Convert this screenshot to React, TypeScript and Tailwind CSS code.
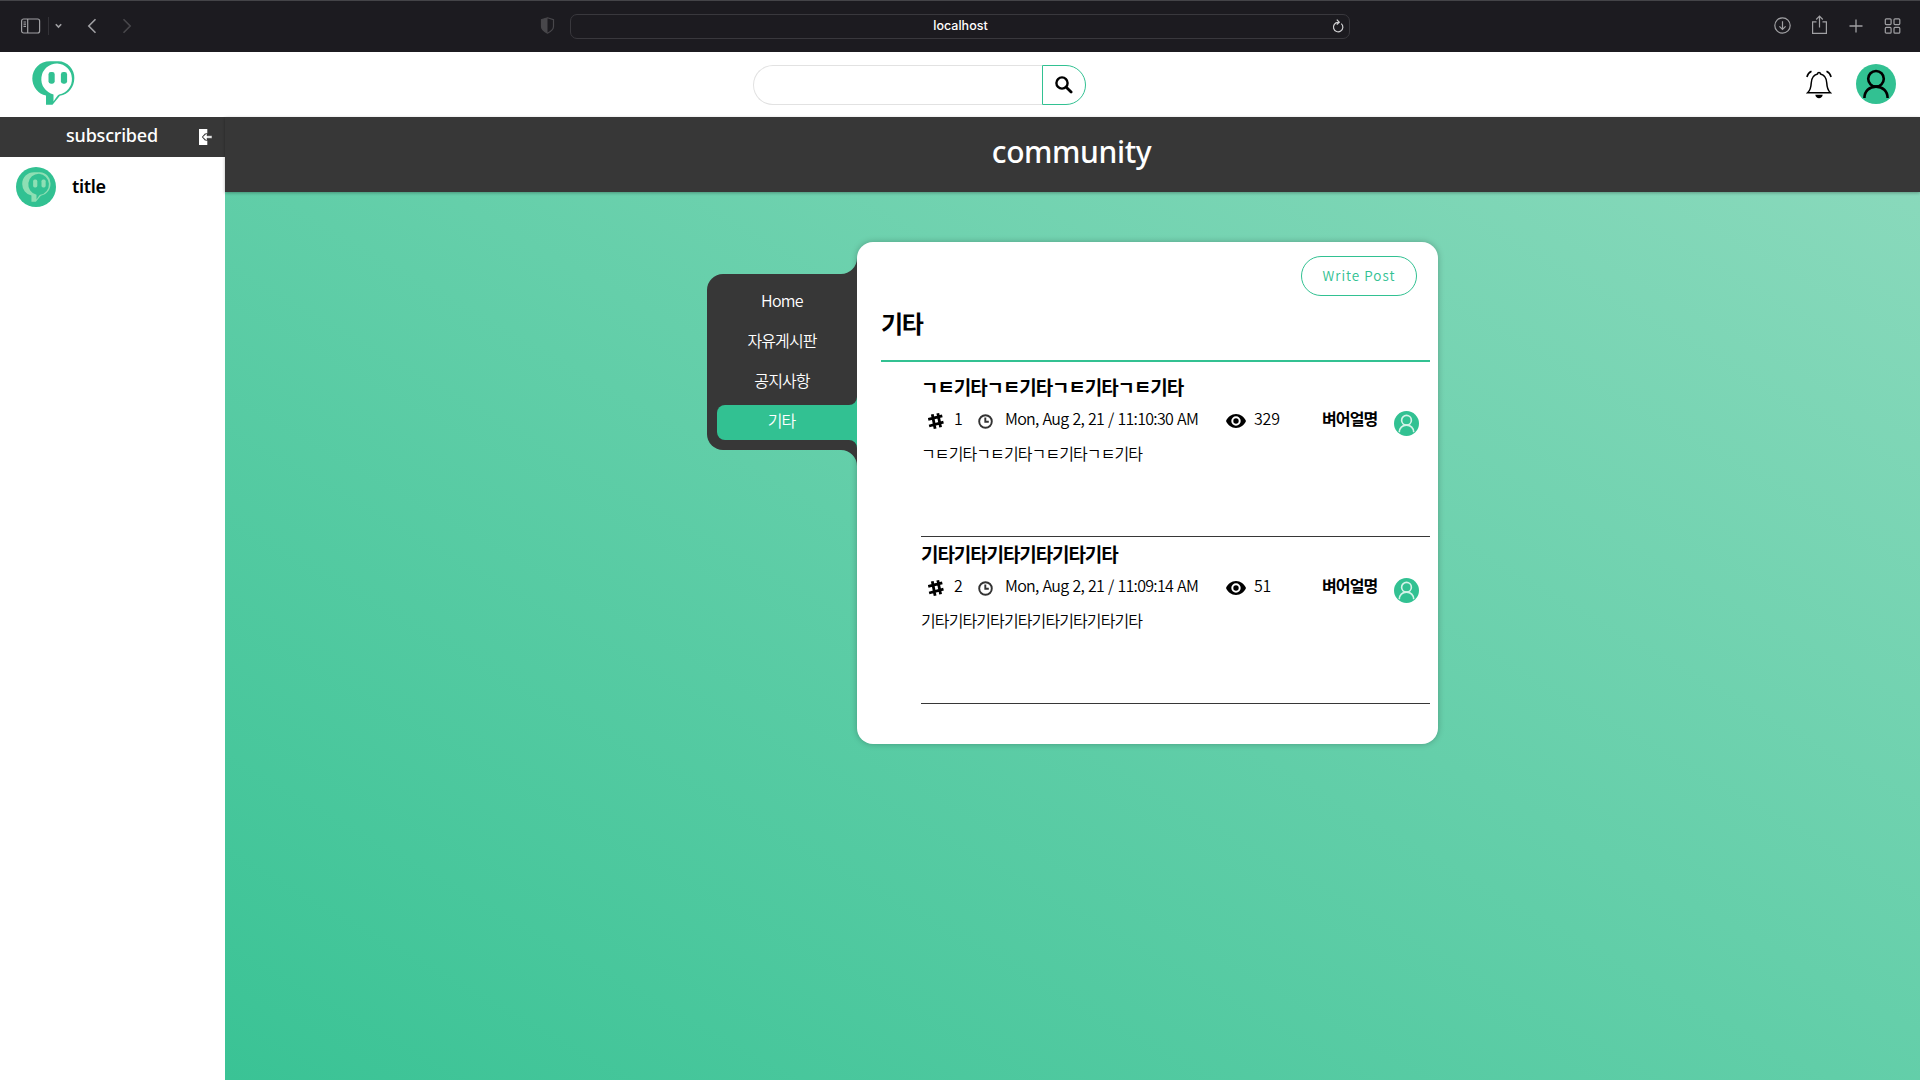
import React from "react";

const Logo = ({ className, fill, bg }: { className: string; fill: string; bg: string }) => (
  <svg viewBox="0 0 43 44" className={className}>
    <path d="M18 0.300h8.500A16 16.500 0 0 1 42.300 17.500c0 8.500-5.800 15.800-14.400 17.300L20.500 43.800h-6.500v-9.200A17.400 17.400 0 0 1 0.300 17.600C0.300 7.600 8 0.300 18 0.300z" fill={fill} />
    <path d="M25.300 2.400a15.700 15.700 0 0 1 1.800 31.100c-1.500.6-2.800 2.900-5.600 7.100v-7.200A15.700 15.700 0 0 1 25.300 2.400z" fill={bg} />
    <rect x="16.500" y="11" width="6.200" height="11.700" rx="2.400" fill={fill} />
    <rect x="28.900" y="11" width="6.200" height="11.700" rx="2.400" fill={fill} />
  </svg>
);

const Person = ({ className }: { className: string }) => (
  <svg viewBox="0 0 40 40" className={className} fill="none" stroke="currentColor" strokeWidth="2.600">
    <circle cx="20" cy="14.800" r="7.800" />
    <path d="M8.400 34c0-6.800 4.900-11.400 11.600-11.400S31.600 27.200 31.600 34" />
  </svg>
);

const Toolbar = () => (
  <div className="flex h-[52px] items-center border-t border-[#444448] bg-[#1c1b20] pb-[2px] font-['Inter',sans-serif]">
    <div className="flex w-[540px] items-center pl-[21px]">
      <svg width="20" height="16" viewBox="0 0 20 16" fill="none" stroke="#a0a0a3" strokeWidth="1.200">
        <rect x="0.600" y="1" width="18" height="14" rx="2" />
        <path d="M6.700 1v14M2.500 4h2.500M2.500 6.200h2.500M2.500 8.400h2.500" />
      </svg>
      <div className="ml-[7px] h-[18px] w-px bg-[#333237]" />
      <svg className="ml-[6px]" width="7" height="6" viewBox="0 0 7 6" fill="none" stroke="#a0a0a3" strokeWidth="1.600"><path d="M.8 1.200l2.700 2.800 2.700-2.800" /></svg>
      <svg className="ml-[25px]" width="10" height="16" viewBox="0 0 10 16" fill="none" stroke="#a0a0a3" strokeWidth="1.600"><path d="M8.500 1.300L1.800 8l6.700 6.700" /></svg>
      <svg className="ml-[25px]" width="10" height="16" viewBox="0 0 10 16" fill="none" stroke="#48474b" strokeWidth="1.600"><path d="M1.500 1.300L8.200 8l-6.700 6.700" /></svg>
    </div>
    <svg width="15" height="17" viewBox="0 0 15 17" className="shrink-0">
      <path d="M7.500.8l6 2v6.700c0 3-2.600 5-6 6.700-3.400-1.700-6-3.700-6-6.700V2.800z" fill="none" stroke="#48474b" strokeWidth="1.200" />
      <path d="M7.500.8v15.400c-3.400-1.700-6-3.700-6-6.700V2.800z" fill="#48474b" />
    </svg>
    <div className="mt-[2px] ml-[15px] flex h-[25px] w-[780px] items-center rounded-[7px] border border-[#39383d] pb-px">
      <div className="flex-1 pl-[18px] text-center text-[12.500px] leading-none font-medium text-white">localhost</div>
      <svg className="mr-[5px] mb-px" width="12" height="14" viewBox="0 0 12 14" fill="none" stroke="#d0d0d2" strokeWidth="1.200">
        <path d="M9.300 4.600A4.700 4.700 0 1 1 6 3.400h1M4.800 .6L7.300 3.300 4.800 5.600" />
      </svg>
    </div>
    <div className="ml-auto flex items-center pr-[19px] text-[#a0a0a3]">
      <svg width="18" height="18" viewBox="0 0 18 18" fill="none" stroke="currentColor" strokeWidth="1.200"><circle cx="8.500" cy="8.500" r="7.700" /><path d="M8.500 4.200v8M5.400 9.300l3.100 3.100 3.100-3.100" /></svg>
      <svg className="mb-[2px] ml-[19px]" width="17" height="20" viewBox="0 0 17 20" fill="none" stroke="currentColor" strokeWidth="1.200"><path d="M5.500 6.800H1.600v11.500h13.800V6.800h-3.900M8.500 12.500V1.300M5.200 4.500l3.300-3.300 3.300 3.300" /></svg>
      <svg className="ml-[21px]" width="14" height="14" viewBox="0 0 14 14" fill="none" stroke="currentColor" strokeWidth="1.300"><path d="M7 .5v13M.5 7h13" /></svg>
      <svg className="ml-[21px]" width="17" height="16" viewBox="0 0 17 16" fill="none" stroke="currentColor" strokeWidth="1.200"><rect x="1.300" y=".8" width="5.800" height="5.800" rx="1" /><rect x="10" y=".8" width="5.800" height="5.800" rx="1" /><rect x="1.300" y="9.400" width="5.800" height="5.800" rx="1" /><rect x="10" y="9.400" width="5.800" height="5.800" rx="1" /></svg>
    </div>
  </div>
);

const Header = () => (
  <header className="flex h-[65px] items-start bg-white">
    <Logo className="mt-[9px] ml-8 h-11 w-[43px]" fill="#32c192" bg="#ffffff" />
    <div className="mt-[13px] ml-[678px] flex h-10">
      <div className="w-[289px] rounded-l-full border border-r-0 border-[#e2e2e2]" />
      <div className="flex w-11 items-center justify-center rounded-r-full border border-[#32c192] text-black">
        <svg width="18" height="18" viewBox="0 0 18 18" fill="none" stroke="currentColor" strokeLinecap="round">
          <circle cx="7" cy="7" r="5.600" strokeWidth="2.400" />
          <path d="M11.500 11.500l4.600 4.600" strokeWidth="2.800" />
        </svg>
      </div>
    </div>
    <svg className="mt-[18px] ml-auto" width="26" height="29" viewBox="0 0 26 29" fill="none" stroke="#000" strokeWidth="1.500">
      <path d="M1.600 22.800c2.500-2.500 3.400-4.500 3.600-9.600.2-5.500 2.300-8.400 6.300-9.300.2-1.900 2.800-1.900 3 0 4 .9 6.100 3.800 6.300 9.300.2 5.100 1.100 7.100 3.600 9.600z" />
      <path d="M.9 7C1.500 4.300 3.200 2.400 5.500 1.300M25.100 7c-.6-2.700-2.300-4.600-4.600-5.700" />
      <path d="M9.300 24.800h7.400c-.4 4.600-7 4.600-7.400 0z" fill="#000" stroke="none" />
    </svg>
    <div className="mt-3 mr-6 ml-[24px] h-10 w-10 rounded-full bg-[#32c192] text-black"><Person className="h-10 w-10" /></div>
  </header>
);

const Sidebar = () => (
  <aside className="w-[225px] shrink-0 bg-white">
    <div className="flex h-10 items-center bg-[#373737] text-white">
      <span className="ml-[66px] w-[92px] pb-[4px] text-[18px] leading-none font-medium tracking-[-0.2px] whitespace-nowrap">subscribed</span>
      <svg className="ml-[41px]" width="13" height="16" viewBox="0 0 13 16" fill="currentColor">
        <path d="M0 0h8.300v4.400H5.900L2.900 8l3 3.600h2.400V16H0z" />
        <path d="M3.600 8l4.400-4v2.800h5v2.400H8V12z" stroke="#373737" strokeWidth=".5" />
      </svg>
    </div>
    <div className="flex items-center pt-[10px] pl-4">
      <div className="flex h-10 w-10 items-center justify-center rounded-full bg-[#32c192]">
        <Logo className="h-[30px] w-[29px]" fill="#8edfb4" bg="#32c192" />
      </div>
      <span className="ml-4 pb-[3px] text-[18px] leading-none font-semibold tracking-[-0.3px]">title</span>
    </div>
  </aside>
);

const menu = ["Home", "자유게시판", "공지사항", "기타"];

const Menu = () => (
  <nav className="relative mt-8 flex h-[176px] w-[150px] flex-col rounded-l-2xl bg-[#373737] pt-[7px] text-center font-['Noto_Sans_CJK_KR',sans-serif] text-[16px] font-[350] tracking-[-0.9px] text-white">
    <svg className="absolute -top-4 right-0" width="16" height="16" viewBox="0 0 16 16"><path d="M16 0v16H0A16 16 0 0 0 16 0z" fill="#373737" /></svg>
    <svg className="absolute right-0 -bottom-4" width="16" height="16" viewBox="0 0 16 16"><path d="M16 16V0H0a16 16 0 0 1 16 16z" fill="#373737" /></svg>
    {menu.map((m) =>
      m === "기타" ? (
        <div key={m} className="relative mt-1 ml-[10px] flex h-[35px] items-center justify-center rounded-l-lg bg-[#32c192] pr-[11px] pb-[6px]">
          <svg className="absolute -top-2 right-0" width="8" height="8" viewBox="0 0 8 8"><path d="M8 0v8H0a8 8 0 0 0 8-8z" fill="#32c192" /></svg>
          <svg className="absolute right-0 -bottom-2" width="8" height="8" viewBox="0 0 8 8"><path d="M8 8V0H0a8 8 0 0 1 8 8z" fill="#32c192" /></svg>
          {m}
        </div>
      ) : (
        <div key={m} className={m === "Home" ? "flex h-10 items-center justify-center pb-[2px] tracking-[-0.7px]" : "flex h-10 items-center justify-center pb-[2px]"}>{m}</div>
      ),
    )}
  </nav>
);

type PostData = { title: string; no: string; date: string; views: string; author: string; body: string };

const posts: PostData[] = [
  { title: "ㄱㅌ기타ㄱㅌ기타ㄱㅌ기타ㄱㅌ기타", no: "1", date: "Mon, Aug 2, 21 / 11:10:30 AM", views: "329", author: "벼어얼명", body: "ㄱㅌ기타ㄱㅌ기타ㄱㅌ기타ㄱㅌ기타" },
  { title: "기타기타기타기타기타기타", no: "2", date: "Mon, Aug 2, 21 / 11:09:14 AM", views: "51", author: "벼어얼명", body: "기타기타기타기타기타기타기타기타" },
];

const Post = ({ p }: { p: PostData }) => (
  <article className="ml-[40px] h-[167px] w-[509px] border-b border-[#373737] text-black">
    <h2 className="pt-[5px] text-[19px] leading-[26px] font-bold tracking-[-1.1px]">{p.title}</h2>
    <div className="flex h-[37px] items-center font-['Noto_Sans_CJK_KR',sans-serif] text-[16px] leading-none font-[350] tracking-[-0.7px]">
      <svg className="mt-[3px] ml-[7px]" width="16" height="16" viewBox="0 0 16 16" fill="none" stroke="#000" strokeWidth="2.800"><path d="M4.300 1.200l2.800 14.500M9.800.3l2.800 14M.2 6.500l14.100-3.700M1.100 13l14.400-3.800" /></svg>
      <span className="ml-[10px] w-[24px] pb-[4px]">{p.no}</span>
      <svg className="mt-[3px]" width="15" height="15" viewBox="0 0 15 15" fill="none" stroke="#333" strokeWidth="1.900"><circle cx="7.500" cy="7.500" r="6.300" /><path d="M7.300 3.500v4.300h3.500" /></svg>
      <span className="ml-[12px] w-[221px] pb-[4px] [word-spacing:1px] whitespace-nowrap">{p.date}</span>
      <svg className="mt-[3px]" width="20" height="14" viewBox="0 0 20 14"><path fillRule="evenodd" d="M10 0c4.500 0 8.300 2.900 10 7-1.700 4.100-5.500 7-10 7S1.700 11.100 0 7c1.700-4.100 5.500-7 10-7zm0 2.300a4.700 4.700 0 1 0 0 9.400 4.700 4.700 0 0 0 0-9.400z" /><circle cx="10" cy="7" r="2.700" /></svg>
      <span className="ml-[8px] w-[68px] pb-[4px] tracking-[-0.2px]">{p.views}</span>
      <span className="pb-[3px] text-[16px] font-bold tracking-[-0.9px] whitespace-nowrap">{p.author}</span>
      <div className="mt-[7px] mr-[11px] ml-auto h-[25px] w-[25px] rounded-full bg-[#32c192] text-[#d4f3e8]"><Person className="h-[25px] w-[25px]" /></div>
    </div>
    <p className="text-[16px] leading-[32px] font-[350] tracking-[-0.9px]">{p.body}</p>
  </article>
);

export default function App() {
  return (
    <div className="flex h-[1080px] w-[1920px] flex-col overflow-hidden bg-white font-['Noto_Sans','Noto_Sans_CJK_KR',sans-serif] text-black">
      <Toolbar />
      <Header />
      <div className="flex flex-1">
        <Sidebar />
        <main className="flex flex-1 flex-col bg-[linear-gradient(to_top_right,#3ac395_0%,#8cdabd_100%)]">
          <div className="flex h-[75px] items-center justify-center bg-[#373737] pr-[2px] pb-[5px] text-[30px] leading-none font-medium tracking-[-0.4px] text-white shadow-[0_1px_3px_rgba(0,0,0,0.3)]">community</div>
          <div className="mt-[50px] ml-[482px] flex">
            <Menu />
            <section className="h-[502px] w-[581px] rounded-2xl bg-white pl-[24px] shadow-[0_0_6px_rgba(0,0,0,0.25)]">
              <button className="mt-[14px] ml-[420px] block h-10 w-[116px] rounded-full border border-[#32c192] pb-[2px] font-['Noto_Sans_CJK_KR',sans-serif] text-[13.500px] font-[350] tracking-[1px] text-[#32c192]">Write Post</button>
              <h1 className="mt-[9px] h-[55px] w-[549px] text-[24px] leading-[38px] font-bold tracking-[-1.300px]">기타</h1>
              <div className="h-0.5 w-[549px] bg-[#32c192]" />
              <div className="pt-[8px]">{posts.map((p) => <Post key={p.no} p={p} />)}</div>
            </section>
          </div>
        </main>
      </div>
    </div>
  );
}
